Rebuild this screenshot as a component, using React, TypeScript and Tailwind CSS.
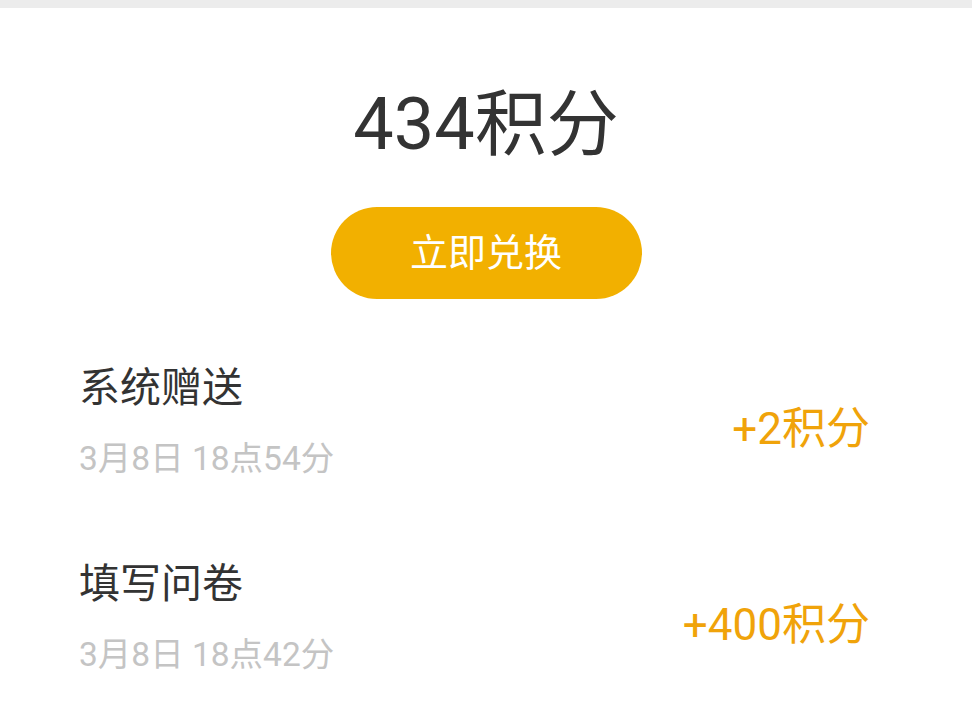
const font = { fontFamily: 'Roboto, "Noto Sans CJK SC", sans-serif' }

const records = [
  { title: '系统赠送', time: '3月8日 18点54分', amount: '+2积分' },
  { title: '填写问卷', time: '3月8日 18点42分', amount: '+400积分' },
]

export default function App() {
  return (
    <div className="min-h-screen bg-white" style={font}>
      <div className="h-2 bg-[#ececec]" />

      <div className="flex flex-col items-center">
        <div className="mt-[72px] text-[72px] leading-[90px] text-[#333333]">434积分</div>
        <button className="mt-[37px] h-[92px] w-[311px] rounded-full bg-[#f2b000] text-[38px] text-white">
          立即兑换
        </button>
      </div>

      <div className="mt-[36px] pl-[79px] pr-[102px]">
        {records.map(r => (
          <div key={r.title} className="flex h-[196px] items-center justify-between pb-[28px]">
            <div className="flex flex-col">
              <span className="text-[41px] leading-[56px] text-[#333333]">{r.title}</span>
              <span className="mt-[23px] text-[33.5px] leading-[40px] text-[#c4c4c4]">{r.time}</span>
            </div>
            <span className="mt-[19px] text-[44px] text-[#f0a30a]">{r.amount}</span>
          </div>
        ))}
      </div>
    </div>
  )
}
